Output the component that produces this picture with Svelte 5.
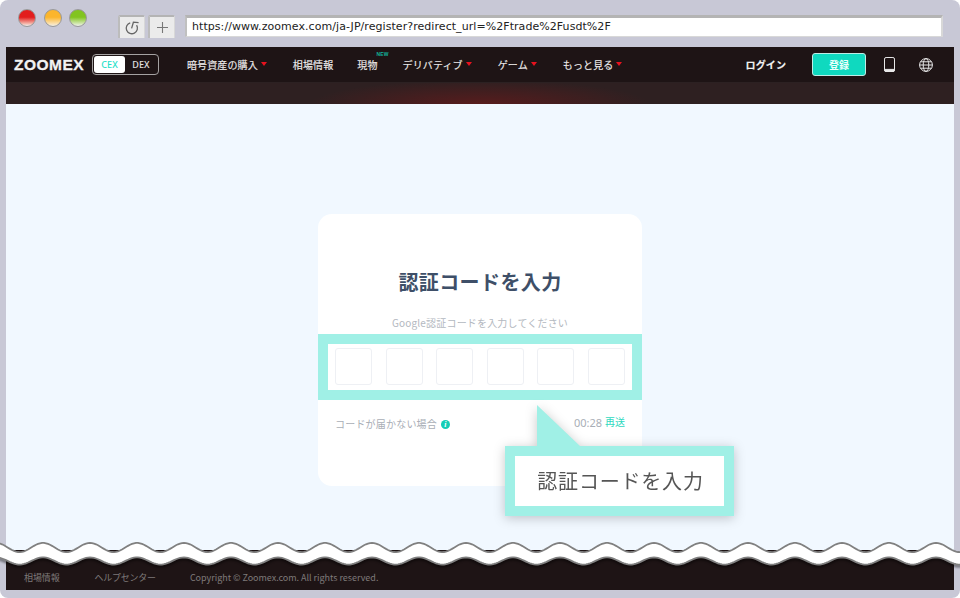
<script>
  const navItems = [
    { label: '暗号資産の購入', caret: true, gap: 26 },
    { label: '相場情報', caret: false, gap: 24 },
    { label: '現物', caret: false, gap: 25, badge: 'NEW' },
    { label: 'デリバティブ', caret: true, gap: 26 },
    { label: 'ゲーム', caret: true, gap: 26 },
    { label: 'もっと見る', caret: true, gap: 0 }
  ];
  const boxes = [0, 1, 2, 3, 4, 5];

  // The torn edge: two sine lines, 47px period, crests at x = 43 + 47k.
  function samples(mid, amp) {
    const pts = [];
    for (let x = -4; x <= 964; x += 2) {
      const y = mid - amp * Math.cos(((x - 43) / 47) * 2 * Math.PI);
      pts.push(`${x},${y.toFixed(2)}`);
    }
    return pts;
  }
  const topLine = samples(17.5, 4.6);
  const bottomLine = samples(31, 3.6);
  const tearBand = [...topLine, ...[...bottomLine].reverse()].join(' ');
  const topPts = topLine.join(' ');
  const bottomPts = bottomLine.join(' ');
</script>

<div class="frame">
  <div class="chrome">
    <div class="lights">
      <span class="light red"></span>
      <span class="light orange"></span>
      <span class="light green"></span>
    </div>
    <button class="tool" aria-label="reload">
      <svg width="16" height="14" viewBox="0 0 16 14" fill="none" stroke="#666" stroke-width="1.3">
        <path d="M6.2 1.8 A5.6 5.6 0 1 0 12.6 4.2" />
        <path d="M7.6 7.4 L9.4 1.2 L14.6 1.6" />
      </svg>
    </button>
    <button class="tool" aria-label="new tab">
      <svg width="11" height="11" viewBox="0 0 11 11" stroke="#777" stroke-width="1.1">
        <path d="M5.5 0 V11 M0 5.5 H11" />
      </svg>
    </button>
    <div class="url">https://www.zoomex.com/ja-JP/register?redirect_url=%2Ftrade%2Fusdt%2F</div>
  </div>

  <div class="page">
    <header class="nav">
      <span class="logo">ZOOMEX</span>
      <div class="switch">
        <span class="on">CEX</span>
        <span class="off">DEX</span>
      </div>
      <nav class="links">
        {#each navItems as item}
          <span class="link" style="margin-right:{item.gap}px">
            {item.label}
            {#if item.caret}<i class="caret"></i>{/if}
            {#if item.badge}<em class="badge">{item.badge}</em>{/if}
          </span>
        {/each}
      </nav>
      <div class="right">
        <span class="login">ログイン</span>
        <span class="signup">登録</span>
        <svg class="phone" width="11" height="15" viewBox="0 0 11 15" fill="none" stroke="#e8e8e8" stroke-width="1">
          <rect x="0.5" y="0.5" width="10" height="14" rx="1.6" />
          <path d="M0.5 12.4 H10.5 V13 a1.5 1.5 0 0 1 -1.5 1.5 H2 A1.5 1.5 0 0 1 0.5 13 Z" fill="#e8e8e8" />
        </svg>
        <svg class="globe" width="14" height="14" viewBox="0 0 14 14" fill="none" stroke="#e8e8e8" stroke-width="1">
          <circle cx="7" cy="7" r="6.4" />
          <ellipse cx="7" cy="7" rx="2.8" ry="6.4" />
          <path d="M0.6 7 H13.4 M1.6 3.8 H12.4 M1.6 10.2 H12.4" />
        </svg>
      </div>
    </header>
    <div class="subbar"></div>

    <main class="body">
      <section class="card">
        <h1>認証コードを入力</h1>
        <p class="hint">Google認証コードを入力してください</p>
        <div class="codes">
          {#each boxes as b}
            <span class="box" data-i={b}></span>
          {/each}
        </div>
        <div class="meta">
          <span class="nocode">コードが届かない場合<i class="info">i</i></span>
          <span class="timer">00:28<b>再送</b></span>
        </div>
      </section>

      <div class="callout">
        <svg class="pointer" width="44" height="42" viewBox="0 0 44 42"><path d="M0 0 L43 41 H0 Z" fill="#a0f0e6" /></svg>
        <div class="bubble">認証コードを入力</div>
      </div>
    </main>

    <footer class="foot">
      <span class="f1">相場情報</span>
      <span class="f2">ヘルプセンター</span>
      <span class="f3">Copyright © Zoomex.com. All rights reserved.</span>
    </footer>
  </div>

  <svg class="tear" width="960" height="44" viewBox="0 0 960 44" fill="none">
    <polyline points={bottomPts} stroke="#000" stroke-opacity="0.45" stroke-width="3" transform="translate(0 1.5)" class="soft" />
    <polygon points={tearBand} fill="#fff" />
    <polyline points={topPts} stroke="#808080" stroke-width="1.8" />
    <polyline points={bottomPts} stroke="#808080" stroke-width="1.8" />
  </svg>
</div>

<style>
  :global(html), :global(body) { margin: 0; background: #fff; }
  .frame {
    width: 960px;
    height: 598px;
    box-sizing: border-box;
    position: relative;
    overflow: hidden;
    background: #c8c8d6;
    border-radius: 8px;
    display: flex;
    flex-direction: column;
    padding: 0 6px 8px;
    font-family: "Noto Sans CJK JP", "Noto Sans", sans-serif;
  }
  .chrome {
    height: 47px;
    flex: none;
    box-sizing: border-box;
    display: flex;
    align-items: flex-start;
    padding: 15px 10px 0 0;
  }
  .lights { display: flex; gap: 7.5px; margin: -6px 0 0 12px; width: 100px; }
  .light {
    width: 18px;
    height: 18px;
    border-radius: 50%;
    box-sizing: border-box;
    border: 1px solid #999;
  }
  .red { background: linear-gradient(#e21d1d 0 45%, #f4b5a8 85%, #eee); }
  .orange { background: linear-gradient(#fbb52c 0 45%, #fbe1b0 85%, #f0eee6); }
  .green { background: linear-gradient(#82c420 0 45%, #d2e8b0 85%, #eee); }
  .tool {
    width: 27px;
    height: 23px;
    margin-right: 3px;
    padding: 0;
    border: 0;
    border-top: 2px solid #b4b4b4;
    border-left: 2px solid #bcbcbc;
    border-right: 1px solid #d8d8d8;
    border-radius: 2px 2px 0 0;
    background: #ebebeb;
    display: flex;
    align-items: center;
    justify-content: center;
  }
  .url {
    width: 758px;
    height: 22px;
    box-sizing: border-box;
    margin-left: 7px;
    background: #fff;
    border-top: 3px solid #b4b4b4;
    border-left: 2px solid #c0c0c0;
    border-right: 2px solid #d8d8d8;
    border-bottom: 1px solid #d8d8d8;
    font: 11px/17px "DejaVu Sans", sans-serif;
    letter-spacing: 0.06px;
    color: #222;
    padding-left: 5px;
    white-space: nowrap;
  }
  .page { flex: 1; display: flex; flex-direction: column; min-height: 0; }
  .nav {
    height: 35px;
    flex: none;
    background: #1e1415;
    display: flex;
    align-items: center;
    padding: 0 21px 0 8px;
    color: #eceaea;
    font-size: 10px;
    letter-spacing: 0.12px;
    -webkit-text-stroke: 0.15px #eceaea;
  }
  .logo {
    width: 78px;
    font: 700 15.5px/1 "Liberation Sans", sans-serif;
    letter-spacing: 0.5px;
    color: #f2f2f2;
    -webkit-text-stroke: 0.3px #f2f2f2;
  }
  .switch {
    width: 67px;
    height: 21px;
    box-sizing: border-box;
    border: 1px solid #a5a2a2;
    border-radius: 4px;
    display: flex;
    align-items: center;
    padding: 0 1px;
    font: 500 9px/1 "Noto Sans", sans-serif;
    -webkit-text-stroke: 0;
  }
  .switch span { display: block; text-align: center; }
  .on { width: 31px; height: 17px; line-height: 17px !important; background: #fff; border-radius: 3px; color: #1fe0c8; }
  .off { flex: 1; color: #e4e2e2; }
  .links { display: flex; margin-left: 28px; }
  .link { position: relative; display: flex; align-items: center; white-space: nowrap; }
  .caret {
    width: 0;
    height: 0;
    margin-left: 3px;
    margin-bottom: 1px;
    border-left: 3px solid transparent;
    border-right: 3px solid transparent;
    border-top: 4px solid #e8121e;
  }
  .badge {
    position: absolute;
    right: -11px;
    top: -5px;
    font: 700 5px/1 "Liberation Sans", sans-serif;
    color: #12b39e;
    -webkit-text-stroke: 0;
  }
  .right { margin-left: auto; display: flex; align-items: center; }
  .login { font-weight: 700; color: #f4f4f4; }
  .signup {
    width: 54px;
    height: 23px;
    margin-left: 26px;
    box-sizing: border-box;
    border-radius: 3px;
    border: 1px solid #bdece5;
    background: #0fd9bf;
    color: #eafffb;
    -webkit-text-stroke: 0;
    font-weight: 700;
    text-align: center;
    line-height: 21px;
  }
  .phone { margin-left: 18px; }
  .globe { margin-left: 24px; }
  .subbar {
    height: 22px;
    flex: none;
    border-top: 1px solid #2c2122;
    box-sizing: border-box;
    background:
      radial-gradient(ellipse 170px 24px at 50% 100%, #571c1d, rgba(87, 28, 29, 0) 100%),
      #2e2021;
  }
  .body {
    flex: 1;
    position: relative;
    min-height: 0;
    background: #f1f8ff;
    display: flex;
    justify-content: center;
    align-items: flex-start;
    padding-top: 110px;
  }
  .card {
    width: 324px;
    height: 272px;
    box-sizing: border-box;
    background: #fff;
    border-radius: 14px;
    text-align: center;
    padding-top: 52px;
  }
  h1 {
    margin: 0;
    font-size: 20px;
    letter-spacing: 0.4px;
    line-height: 32px;
    font-weight: 700;
    color: #3e4f68;
  }
  .hint {
    margin: 17px 0 0;
    font-size: 10px;
    letter-spacing: 0.18px;
    line-height: 16px;
    color: #b3b8c0;
  }
  .codes {
    height: 66px;
    margin-top: 3px;
    box-sizing: border-box;
    border: 10px solid #a0f0e6;
    background: #fff;
    display: flex;
    justify-content: space-between;
    align-items: center;
    padding: 0 7px 1px;
  }
  .box {
    width: 37px;
    height: 37px;
    box-sizing: border-box;
    border: 1px solid #eef0f4;
    border-radius: 3px;
  }
  .meta {
    display: flex;
    justify-content: space-between;
    padding: 16px 17px 0;
    font-size: 10px;
    line-height: 16px;
    color: #a9aeb6;
  }
  .nocode { display: flex; align-items: center; letter-spacing: 0.2px; }
  .info {
    width: 9px;
    height: 9px;
    margin-left: 4px;
    border-radius: 50%;
    background: #14cdb6;
    color: #fff;
    font: italic 700 8px/9px "Liberation Serif", serif;
    text-align: center;
  }
  .timer { font-family: "Noto Sans", sans-serif; font-size: 11px; margin-top: -1px; }
  .timer b { font: 400 10px/16px "Noto Sans CJK JP", sans-serif; color: #2fd9c0; margin-left: 3px; position: relative; top: -1px; }
  .callout {
    position: absolute;
    left: 499px;
    top: 342px;
    width: 229px;
    height: 70px;
    filter: drop-shadow(0 2px 6px rgba(0, 0, 0, 0.22));
  }
  .pointer { position: absolute; left: 32px; top: -41px; }
  .bubble {
    position: relative;
    box-sizing: border-box;
    height: 100%;
    border: 10px solid #a0f0e6;
    background: #fff;
    font-size: 20px;
    letter-spacing: 0.8px;
    line-height: 50px;
    padding-left: 2px;
    text-align: center;
    color: #555;
  }
  .foot {
    height: 40px;
    flex: none;
    background: #1e1415;
    box-sizing: border-box;
    display: flex;
    align-items: flex-end;
    padding: 0 0 5px 18px;
    font-size: 9px;
    line-height: 14px;
    color: #7f7a7a;
  }
  .f1 { margin-right: 35px; letter-spacing: -0.1px; }
  .f2 { margin-right: 34px; letter-spacing: -0.25px; }
  .f3 { letter-spacing: -0.02px; }
  .tear { position: absolute; left: 0; top: 530px; }
  .soft { filter: blur(1.2px); }
</style>
